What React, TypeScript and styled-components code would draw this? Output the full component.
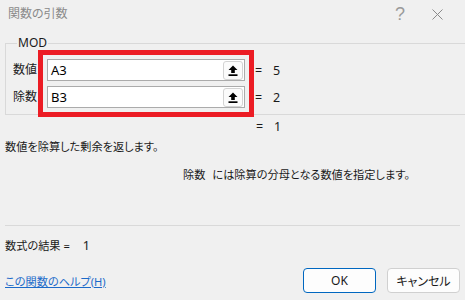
import styled, { createGlobalStyle } from 'styled-components';

const GlobalStyle = createGlobalStyle`
  html, body {
    margin: 0;
    padding: 0;
    background: #f0f0f0;
  }
  * {
    box-sizing: border-box;
  }
`;

const Window = styled.div`
  width: 465px;
  height: 300px;
  overflow: hidden;
  display: flex;
  flex-direction: column;
  background: #f0f0f0;
  color: #1a1a1a;
  font-family: 'Noto Sans', 'Noto Sans CJK JP', sans-serif;
  font-size: 11.2px;
  font-feature-settings: 'palt';
`;

const TitleBar = styled.div`
  height: 28px;
  display: flex;
  align-items: center;
  padding: 0 13px 0 8px;
`;

const Title = styled.span`
  color: #8a8a8a;
  font-size: 12px;
  line-height: 16px;
`;

const Controls = styled.div`
  margin-left: auto;
  display: flex;
  gap: 7px;
`;

const ControlButton = styled.div`
  width: 30px;
  height: 24px;
  display: flex;
  align-items: center;
  justify-content: center;
  color: #9a9a9a;
  font-size: 18px;
  font-family: 'Liberation Sans', sans-serif;
`;

const Content = styled.div`
  flex: 1;
  display: flex;
  flex-direction: column;
  padding: 0 5px;
`;

const Group = styled.fieldset`
  margin: 8px -10px 0 0;
  padding: 0 0 0 7px;
  border: 1px solid #d9d9d9;
  min-width: 0;
`;

const Legend = styled.legend`
  margin-left: 4px;
  padding: 0 1px;
  font-size: 12px;
  line-height: 14px;
`;

const ArgsRow = styled.div`
  display: flex;
  align-items: flex-start;
  margin-bottom: -3px;
`;

const Column = styled.div`
  display: flex;
  flex-direction: column;
  gap: 5px;
  padding-top: 9px;
`;

const LabelCell = styled.div`
  width: 25px;
  height: 22px;
  line-height: 22px;
  font-size: 12px;
  white-space: nowrap;
  overflow: hidden;
`;

const Highlight = styled.div`
  display: flex;
  flex-direction: column;
  gap: 5px;
  padding: 4px;
  border: 5px solid #ec1c24;
`;

const InputBox = styled.div`
  width: 198px;
  height: 22px;
  display: flex;
  align-items: center;
  padding: 0 1px 0 3px;
  background: #fff;
  border: 1px solid #ababab;
`;

const InputValue = styled.span`
  flex: 1;
  font-size: 13px;
  line-height: 20px;
  color: #000;
`;

const PickButton = styled.div`
  width: 20px;
  height: 19px;
  display: flex;
  align-items: center;
  justify-content: center;
  background: #fbfbfb;
  border: 1px solid #d3d3d3;
  border-radius: 3px;
`;

const ResultCell = styled.div`
  height: 22px;
  display: flex;
  align-items: center;
  padding-left: 1px;
  font-size: 12.5px;
`;

const Equals = styled.span`
  width: 18px;
`;

const ResultLine = styled.div`
  margin-top: 4px;
  padding-left: 251px;
  display: flex;
  line-height: 16px;
  font-size: 12.5px;
`;

const TextLine = styled.div<{ $top: number; $indent?: number }>`
  margin-top: ${({ $top }) => $top}px;
  padding-left: ${({ $indent }) => $indent ?? 0}px;
  line-height: 16px;
  white-space: nowrap;
`;

const ArgName = styled.span`
  margin-right: 7px;
`;

const Number = styled.span`
  font-size: 12.5px;
  margin-left: 13px;
`;

const Separator = styled.div`
  margin-top: 42px;
  height: 1px;
  background: #d9d9d9;
`;

const Footer = styled.div`
  margin-top: 14px;
  display: flex;
  align-items: center;
  gap: 11px;
`;

const HelpLink = styled.a`
  margin-right: auto;
  color: #1b6ac9;
  text-decoration: underline;
  cursor: pointer;
`;

const Button = styled.button<{ $primary?: boolean }>`
  width: 73px;
  height: 25px;
  padding: 0;
  font: inherit;
  font-size: 12px;
  color: #1a1a1a;
  background: #fdfdfd;
  border: 1px solid ${({ $primary }) => ($primary ? '#0067c0' : '#d0d0d0')};
  border-radius: 4px;
`;

const UploadIcon = () => (
  <svg width="10" height="11" viewBox="0 0 10 11">
    <polygon points="5,0.5 9.5,5 6.8,5 6.8,8 3.2,8 3.2,5 0.5,5" fill="#000" />
    <rect x="0.5" y="9.3" width="9" height="1.7" fill="#000" />
  </svg>
);

const CloseIcon = () => (
  <svg width="11" height="11" viewBox="0 0 11 11">
    <path d="M0.5 0.5 L10.5 10.5 M10.5 0.5 L0.5 10.5" stroke="#8a8a8a" strokeWidth="1" />
  </svg>
);

const args = [
  { label: '数値', value: 'A3', result: '5' },
  { label: '除数', value: 'B3', result: '2' },
];

export default function App() {
  return (
    <>
      <GlobalStyle />
      <Window>
        <TitleBar>
          <Title>関数の引数</Title>
          <Controls>
            <ControlButton>?</ControlButton>
            <ControlButton>
              <CloseIcon />
            </ControlButton>
          </Controls>
        </TitleBar>
        <Content>
          <Group>
            <Legend>MOD</Legend>
            <ArgsRow>
              <Column>
                {args.map((a) => (
                  <LabelCell key={a.label}>{a.label}</LabelCell>
                ))}
              </Column>
              <Highlight>
                {args.map((a) => (
                  <InputBox key={a.label}>
                    <InputValue>{a.value}</InputValue>
                    <PickButton>
                      <UploadIcon />
                    </PickButton>
                  </InputBox>
                ))}
              </Highlight>
              <Column>
                {args.map((a) => (
                  <ResultCell key={a.label}>
                    <Equals>=</Equals>
                    {a.result}
                  </ResultCell>
                ))}
              </Column>
            </ArgsRow>
          </Group>
          <ResultLine>
            <Equals>=</Equals>1
          </ResultLine>
          <TextLine $top={4}>数値を除算した剰余を返します。</TextLine>
          <TextLine $top={12} $indent={178}>
            <ArgName>除数</ArgName>には除算の分母となる数値を指定します。
          </TextLine>
          <Separator />
          <TextLine $top={12}>
            数式の結果 =<Number>1</Number>
          </TextLine>
          <Footer>
            <HelpLink>この関数のヘルプ(H)</HelpLink>
            <Button $primary>OK</Button>
            <Button>キャンセル</Button>
          </Footer>
        </Content>
      </Window>
    </>
  );
}
